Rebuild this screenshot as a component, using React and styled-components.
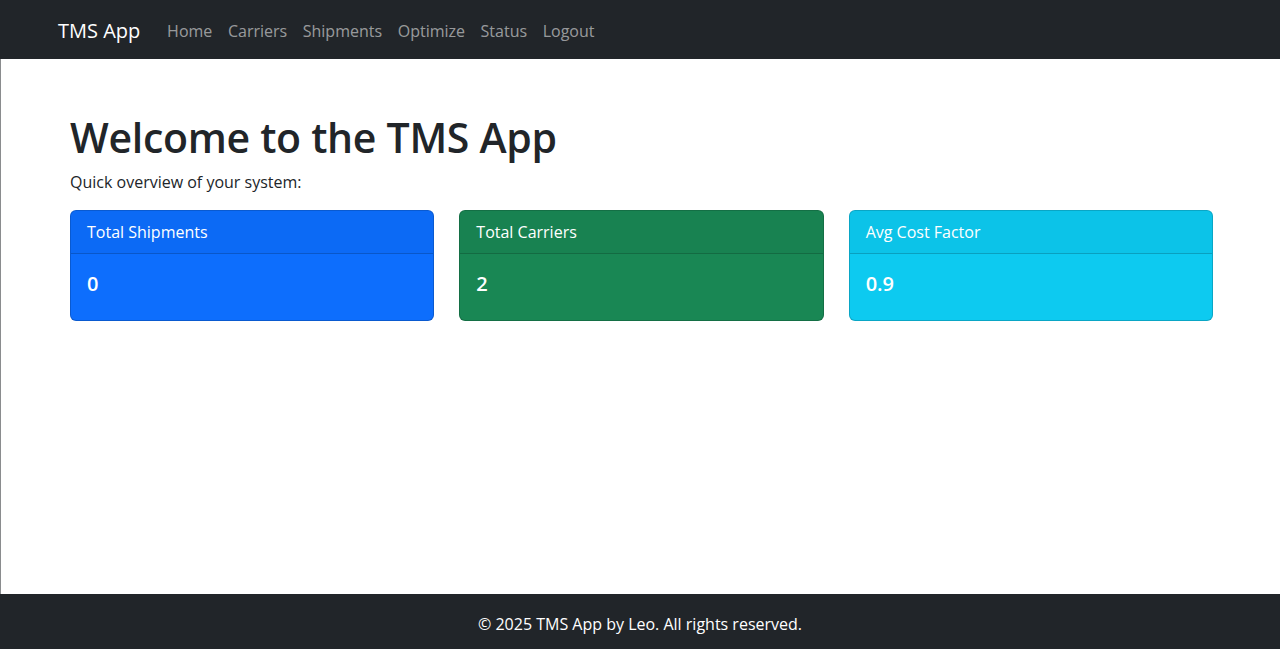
import React from 'react'
import styled, { createGlobalStyle } from 'styled-components'

const GlobalStyle = createGlobalStyle`
* { box-sizing: border-box; }
html, body { margin: 0; padding: 0; }
body {
  font-family: "Open Sans", "Noto Sans", sans-serif;
  font-size: 16px;
  line-height: 1.5;
  color: #212529;
  background: #fff;
}
`

const Page = styled.div`
min-height: 100vh;
display: flex;
flex-direction: column;
`

const Navbar = styled.nav`
height: 59px;
background: #212529;
display: flex;
align-items: center;
padding: 2px 0 0 58px;
`

const Brand = styled.a`
color: #fff;
font-size: 20px;
margin-right: 19px;
text-decoration: none;
`

const NavLinks = styled.ul`
list-style: none;
display: flex;
margin: 0;
padding: 0;
`

const NavLink = styled.a`
display: block;
padding: 8px 7.8px;
color: rgba(255, 255, 255, 0.55);
font-size: 16px;
text-decoration: none;
`

const Main = styled.main`
flex: 1;
border-left: 1px solid #8a8c8e;
padding: 54px 0 0 69px;
`

const Container = styled.div`
width: 1143px;
`

const Title = styled.h1`
margin: 0 0 8px;
font-size: 41px;
font-weight: 600;
line-height: 1.2;
letter-spacing: -0.3px;
`

const Lead = styled.p`
margin: 0 0 16px;
font-size: 16px;
`

const CardGrid = styled.div`
display: grid;
grid-template-columns: repeat(3, 1fr);
gap: 25px;
`

const Card = styled.div`
background: ${p => p.$bg};
color: #fff;
border: 1px solid rgba(0, 0, 0, 0.175);
border-radius: 6px;
overflow: hidden;
`

const CardHeader = styled.div`
padding: 9px 16px;
background: rgba(0, 0, 0, 0.03);
border-bottom: 1px solid rgba(0, 0, 0, 0.175);
font-size: 16px;
line-height: 24px;
`

const CardBody = styled.div`
padding: 18px 16px 24px;
`

const Value = styled.h5`
margin: 0;
font-size: 20px;
font-weight: 600;
line-height: 24px;
`

const Footer = styled.footer`
height: 55px;
background: #212529;
color: #fff;
display: flex;
align-items: center;
justify-content: center;
font-size: 16px;
padding-top: 4px;
`

const links = ['Home', 'Carriers', 'Shipments', 'Optimize', 'Status', 'Logout']

const stats = [
  { label: 'Total Shipments', value: '0', bg: '#0d6efd' },
  { label: 'Total Carriers', value: '2', bg: '#198754' },
  { label: 'Avg Cost Factor', value: '0.9', bg: '#0dcaf0' },
]

export default function App() {
  return (
    <>
      <GlobalStyle />
      <Page>
        <Navbar>
          <Brand href="#">TMS App</Brand>
          <NavLinks>
            {links.map(l => (
              <li key={l}><NavLink href="#">{l}</NavLink></li>
            ))}
          </NavLinks>
        </Navbar>
        <Main>
          <Container>
            <Title>Welcome to the TMS App</Title>
            <Lead>Quick overview of your system:</Lead>
            <CardGrid>
              {stats.map(s => (
                <Card key={s.label} $bg={s.bg}>
                  <CardHeader>{s.label}</CardHeader>
                  <CardBody><Value>{s.value}</Value></CardBody>
                </Card>
              ))}
            </CardGrid>
          </Container>
        </Main>
        <Footer>© 2025 TMS App by Leo. All rights reserved.</Footer>
      </Page>
    </>
  )
}
